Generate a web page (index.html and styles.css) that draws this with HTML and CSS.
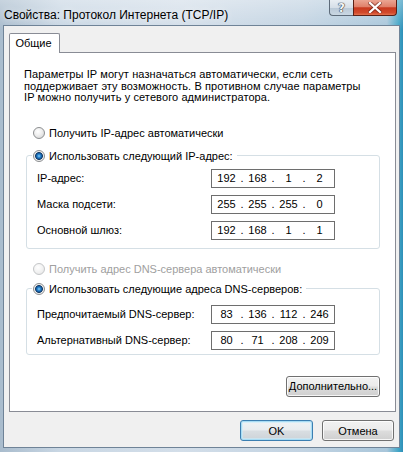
FILE: index.html
```html
<!DOCTYPE html>
<html lang="ru">
<head>
<meta charset="utf-8">
<title>Свойства: Протокол Интернета (TCP/IP)</title>
<link rel="stylesheet" href="styles.css">
</head>
<body>
<div class="window">
  <div class="titlebar">
    <span class="title">Свойства: Протокол Интернета (TCP/IP)</span>
    <div class="caption-buttons">
      <div class="cbtn help">?</div>
      <div class="cbtn close">
        <svg width="14" height="11" viewBox="0 0 14 11">
          <path d="M2 1 L12 10 M12 1 L2 10" stroke="#5a1a10" stroke-width="4" stroke-linecap="square" fill="none" opacity="0.55"/>
          <path d="M2 1 L12 10 M12 1 L2 10" stroke="#ffffff" stroke-width="2.2" stroke-linecap="square" fill="none"/>
        </svg>
      </div>
    </div>
  </div>
  <div class="client">
    <div class="tabs"><div class="tab">Общие</div></div>
    <div class="panel">
      <p class="intro">Параметры IP могут назначаться автоматически, если сеть<br>поддерживает эту возможность. В противном случае параметры<br>IP можно получить у сетевого администратора.</p>

      <div class="radio-row r-auto-ip"><span class="radio"></span><span>Получить IP-адрес автоматически</span></div>

      <fieldset class="group g-ip">
        <legend><span class="radio checked"></span><span>Использовать следующий IP-адрес:</span></legend>
        <div class="field-row"><span class="label">IP-адрес:</span>
          <div class="ip"><span class="seg">192</span><span class="dot">.</span><span class="seg">168</span><span class="dot">.</span><span class="seg">1</span><span class="dot">.</span><span class="seg">2</span></div>
        </div>
        <div class="field-row"><span class="label">Маска подсети:</span>
          <div class="ip"><span class="seg">255</span><span class="dot">.</span><span class="seg">255</span><span class="dot">.</span><span class="seg">255</span><span class="dot">.</span><span class="seg">0</span></div>
        </div>
        <div class="field-row"><span class="label">Основной шлюз:</span>
          <div class="ip"><span class="seg">192</span><span class="dot">.</span><span class="seg">168</span><span class="dot">.</span><span class="seg">1</span><span class="dot">.</span><span class="seg">1</span></div>
        </div>
      </fieldset>

      <div class="radio-row r-auto-dns disabled"><span class="radio"></span><span>Получить адрес DNS-сервера автоматически</span></div>

      <fieldset class="group g-dns">
        <legend><span class="radio checked"></span><span>Использовать следующие адреса DNS-серверов:</span></legend>
        <div class="field-row"><span class="label">Предпочитаемый DNS-сервер:</span>
          <div class="ip"><span class="seg">83</span><span class="dot">.</span><span class="seg">136</span><span class="dot">.</span><span class="seg">112</span><span class="dot">.</span><span class="seg">246</span></div>
        </div>
        <div class="field-row"><span class="label">Альтернативный DNS-сервер:</span>
          <div class="ip"><span class="seg">80</span><span class="dot">.</span><span class="seg">71</span><span class="dot">.</span><span class="seg">208</span><span class="dot">.</span><span class="seg">209</span></div>
        </div>
      </fieldset>

      <div class="adv-row"><button class="btn adv">Дополнительно...</button></div>
    </div>
    <div class="dialog-buttons">
      <button class="btn ok default">OK</button>
      <button class="btn cancel">Отмена</button>
    </div>
  </div>
</div>
</body>
</html>
```

FILE: styles.css
```css
* { box-sizing: border-box; }

html, body {
  margin: 0;
  padding: 0;
  width: 403px;
  height: 452px;
  overflow: hidden;
  background: #ffffff;
}

body {
  font-family: "Liberation Sans", Arial, sans-serif;
  font-size: 11px;
  color: #000;
}

.window {
  width: 403px;
  height: 452px;
  display: flex;
  flex-direction: column;
  background:
    linear-gradient(to bottom, rgba(255,255,255,0.35), rgba(255,255,255,0) 30px),
    linear-gradient(to right, #a9bccd 0%, #c9d7e4 15%, #d3dee9 45%, #c2d3e2 75%, #a9c6da 96%, #3ea4c6 99%, #2f8fb8 100%);
}

.titlebar {
  height: 25px;
  flex: none;
  display: flex;
  justify-content: space-between;
  align-items: flex-start;
  padding: 0 6px 0 4px;
}

.title {
  font-family: "Liberation Sans", Arial, sans-serif;
  font-size: 12px;
  line-height: 14px;
  margin-top: 8px;
  color: #000;
  text-shadow: 0 0 6px rgba(255,255,255,0.9);
}

.caption-buttons {
  display: flex;
  height: 16px;
}

.cbtn {
  height: 16px;
  display: flex;
  align-items: center;
  justify-content: center;
  border: 1px solid #5d6b7a;
  border-top: none;
}

.help {
  width: 24px;
  border-radius: 0 0 0 4px;
  border-right: none;
  background: linear-gradient(to bottom, #e9eef3 0%, #d6dfe8 50%, #b9c8d6 51%, #c9d7e3 100%);
  font-family: "DejaVu Sans", sans-serif;
  font-weight: bold;
  font-size: 12px;
  color: #f4f6f8;
  text-shadow: 0 0 1px #2b3440, 0 0 1px #2b3440, 0 0 1px #2b3440;
}

.close {
  width: 44px;
  border-radius: 0 0 4px 0;
  border-color: #5b2015;
  background: linear-gradient(to bottom, #eba593 0%, #e0806a 45%, #c8391f 52%, #d24a2c 85%, #e3734f 100%);
}

.client {
  flex: 1;
  display: flex;
  flex-direction: column;
  margin: 0 3px 4px 3px;
  border: 1px solid #6f8397;
  background: #f0f0f0;
}

.tabs {
  display: flex;
  padding-left: 5px;
  margin-top: 7px;
}

.tab {
  position: relative;
  z-index: 1;
  width: 51px;
  height: 20px;
  margin-bottom: -1px;
  border: 1px solid #898c95;
  border-bottom: none;
  border-radius: 2px 2px 0 0;
  background: #ffffff;
  text-align: center;
  line-height: 19px;
  padding-right: 2px;
}

.panel {
  flex: 1;
  margin: 0 3px 0 5px;
  border: 1px solid #898c95;
  background: #ffffff;
  padding: 16px 15px 0 14px;
  display: flex;
  flex-direction: column;
}

.intro {
  margin: 0;
  line-height: 11.5px;
  letter-spacing: 0.1px;
}

.radio-row {
  display: flex;
  align-items: center;
  height: 14px;
  margin-left: 9px;
  gap: 4px;
}

.r-auto-ip { margin-top: 22px; }
.r-auto-dns { margin-top: 13px; }

.disabled { color: #a0a0a0; }

.radio {
  flex: none;
  width: 12px;
  height: 12px;
  border-radius: 50%;
  border: 1px solid #8c8e90;
  background: radial-gradient(circle at 40% 35%, #ffffff 0%, #f0f0f0 40%, #cfcfcf 100%);
}

.disabled .radio {
  border-color: #c4c6c8;
  background: radial-gradient(circle at 40% 35%, #ffffff 0%, #f2f2f2 50%, #e2e2e2 100%);
}

.radio.checked {
  background: radial-gradient(circle at 50% 50%, #8fd0f5 0px, #2a86d0 1.6px, #12508f 3px, #1c3f66 3.6px, #e9e9e9 4.2px, #f7f7f7 5px, #d8d8d8 6px);
}

.group {
  margin: 0 0 0 2px;
  border: 1px solid #d5dfe5;
  border-radius: 3px;
  padding: 6px 0 8px 10px;
  min-width: 0;
}

.group legend {
  display: flex;
  align-items: center;
  gap: 4px;
  height: 14px;
  padding: 0 4px 0 1px;
  margin-left: -5px;
}

.g-ip { margin-top: 9px; padding-top: 6px; padding-bottom: 8px; }
.g-dns { margin-top: 6px; padding-top: 9px; padding-bottom: 4px; }

.field-row {
  display: grid;
  grid-template-columns: 174px 124px;
  align-items: center;
  height: 19px;
}

.field-row + .field-row { margin-top: 7px; }

.ip {
  height: 19px;
  border: 1px solid #6e6e6e;
  background: #fff;
  display: flex;
  align-items: center;
  padding: 0 1px;
}

.seg {
  width: 27px;
  text-align: center;
}

.dot {
  width: 4px;
  text-align: center;
}

.adv-row {
  display: flex;
  justify-content: flex-end;
  margin-top: 21px;
}

.btn {
  font-family: "Liberation Sans", Arial, sans-serif;
  font-size: 11px;
  color: #000;
  height: 21px;
  padding: 0;
  border: 1px solid #707070;
  border-radius: 3px;
  background: linear-gradient(to bottom, #f2f2f2 0%, #ebebeb 48%, #dddddd 52%, #cfcfcf 100%);
  box-shadow: inset 0 0 0 1px rgba(255,255,255,0.8);
}

.adv { width: 94px; }

.dialog-buttons {
  display: flex;
  justify-content: flex-end;
  gap: 9px;
  margin: 8px 5px 6px 0;
}

.ok { width: 73px; }
.cancel { width: 72px; }

.btn.default {
  border-color: #3c7fb1;
  box-shadow: inset 0 0 0 1px #a8dcf4, inset 0 0 0 2px rgba(200,236,252,0.6);
  background: linear-gradient(to bottom, #f0f3f5 0%, #e8ecef 48%, #d9dee2 52%, #cdd3d8 100%);
}
```
